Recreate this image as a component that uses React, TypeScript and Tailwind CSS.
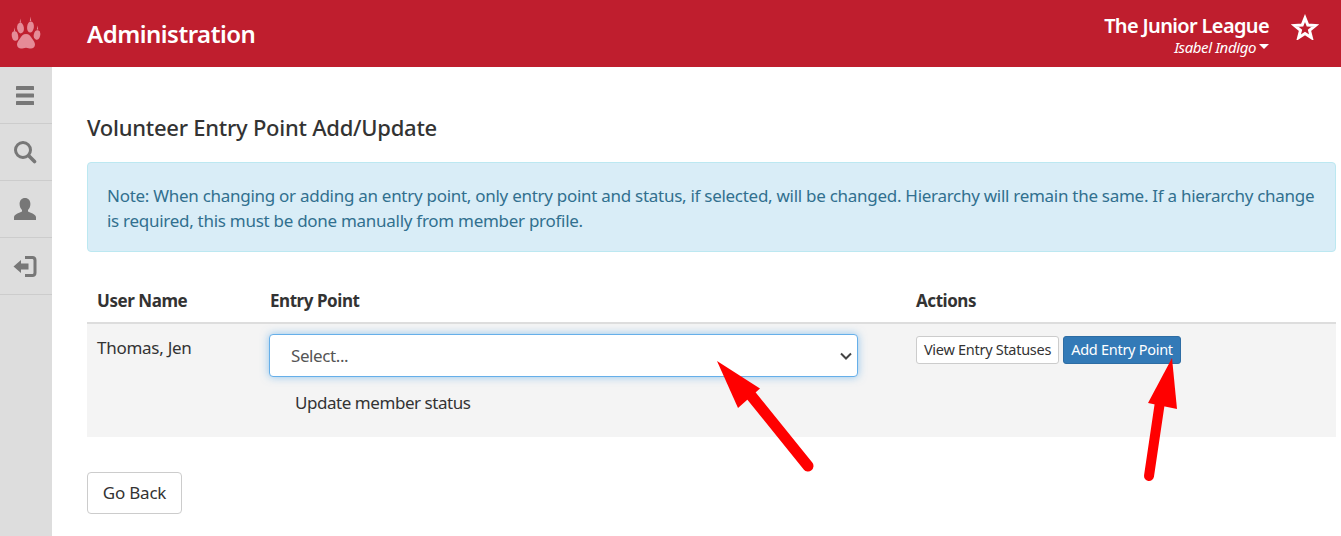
import React from "react";

function Paw() {
  return (
    <svg width="30" height="35" viewBox="0 0 30 35" fill="#e58b97">
      <path d="M15 18c3 0 4.500 2 6 4.500 1.500 2.300 3 3.700 3 6 0 2.800-2 4-4 4-1.800 0-3.300-.8-5-.8s-3.200.8-5 .8c-2 0-4-1.200-4-4 0-2.300 1.500-3.700 3-6 1.500-2.500 3-4.500 6-4.500z" />
      <ellipse cx="4" cy="20" rx="3.200" ry="4.800" transform="rotate(-10 4 20)" />
      <ellipse cx="9.500" cy="12" rx="3.400" ry="5.400" transform="rotate(-6 9.500 12)" />
      <ellipse cx="19.500" cy="11" rx="3.400" ry="5.600" transform="rotate(6 19.500 11)" />
      <ellipse cx="26" cy="19" rx="3.200" ry="4.800" transform="rotate(12 26 19)" />
      <path d="M9.300 2.500l.7 4h-1.400zM19.500 .5l.7 4.500h-1.400zM26.500 9.500l.7 4h-1.400zM3.500 11.500l.7 4h-1.400z" />
    </svg>
  );
}

function Star() {
  return (
    <svg width="28" height="26" viewBox="0 0 28 26" fill="none" stroke="#fff" strokeWidth="3" strokeLinejoin="miter">
      <path d="M14 4l2.800 7 7.600.5-5.900 4.800 1.900 7.400L14 19.600l-6.400 4.100 1.900-7.400-5.900-4.800 7.600-.5z" />
    </svg>
  );
}

function Menu() {
  return (
    <svg width="20" height="19" viewBox="0 0 20 19" fill="#777">
      <rect x="1" y="0" width="18" height="4" rx="0.6" />
      <rect x="1" y="7.500" width="18" height="4" rx="0.6" />
      <rect x="1" y="15" width="18" height="4" rx="0.6" />
    </svg>
  );
}

function Search() {
  return (
    <svg width="24" height="24" viewBox="0 0 24 24" fill="none" stroke="#777">
      <circle cx="10" cy="10" r="7.500" strokeWidth="3" />
      <path d="M16 16l5.500 5.500" strokeWidth="3.600" strokeLinecap="round" />
    </svg>
  );
}

function User() {
  return (
    <svg width="24" height="24" viewBox="0 0 24 24" fill="#777">
      <path d="M12 1c3.400 0 5.400 2.600 5.400 6 0 2.500-1 4.700-2.400 6v1.600c2.400 1.100 7.200 2.400 8 5.400V23H1v-3c.8-3 5.600-4.300 8-5.400V13c-1.400-1.300-2.400-3.500-2.400-6 0-3.400 2-6 5.400-6z" />
    </svg>
  );
}

function LogIn() {
  return (
    <svg width="24" height="21" viewBox="0 0 24 21" fill="#777">
      <path d="M0.500 10.500L8 4v3.500h7.500v6H8V17z" />
      <path d="M12 0h7.500C21.900 0 23.500 1.600 23.500 4v13c0 2.400-1.600 4-4 4H12v-3h7c1 0 1.500-.5 1.500-1.500v-12C20.500 3.500 20 3 19 3h-7z" />
    </svg>
  );
}

function Chevron() {
  return (
    <svg width="12" height="8" viewBox="0 0 12 8" fill="none" stroke="#444" strokeWidth="2">
      <path d="M1 1.500l5 5 5-5" />
    </svg>
  );
}

function SideItem({ children }: { children: React.ReactNode }) {
  return (
    <div className="flex h-[57px] items-center justify-center border-b border-[#cccccc] pr-[3px]">{children}</div>
  );
}

export default function App() {
  return (
    <div
      className="relative flex h-[536px] w-[1341px] flex-col overflow-hidden bg-white text-[#333333]"
      style={{ fontFamily: '"Noto Sans", sans-serif' }}
    >
      <header className="flex h-[67px] shrink-0 items-center bg-[#bf1e2e] text-white">
        <div className="flex w-[52px] shrink-0 justify-center pr-[1px]">
          <Paw />
        </div>
        <div className="pl-[35px] text-[24px] font-semibold tracking-[-0.5px]">Administration</div>
        <div className="ml-auto flex flex-col items-end pt-[2px]">
          <div className="text-[20px] font-semibold leading-[24px] tracking-[-0.65px]">The Junior League</div>
          <div className="flex items-center gap-[3px] text-[15px] italic leading-[18px] tracking-[-0.4px]">
            Isabel Indigo
            <span className="h-0 w-0 border-x-[5px] border-t-[5px] border-x-transparent border-t-white" />
          </div>
        </div>
        <div className="flex w-[72px] justify-center pb-[14px]">
          <Star />
        </div>
      </header>
      <div className="flex flex-1">
        <aside className="w-[52px] shrink-0 bg-[#dddddd]">
          <SideItem><Menu /></SideItem>
          <SideItem><Search /></SideItem>
          <SideItem><User /></SideItem>
          <SideItem><LogIn /></SideItem>
        </aside>
        <main className="flex-1 pl-[35px] pr-[5px]">
          <h1 className="mt-[46px] text-[22px] font-medium leading-[28px] tracking-[-0.25px]">Volunteer Entry Point Add/Update</h1>
          <div className="mt-[21px] h-[90px] rounded-[4px] border border-[#bce8f1] bg-[#d9edf7] pl-[19px] pr-[10px] pt-[20px] text-[17px] leading-[25px] tracking-[-0.28px] text-[#31708f]">
            Note: When changing or adding an entry point, only entry point and status, if selected, will be changed. Hierarchy will remain the same. If a hierarchy change is required, this must be done manually from member profile.
          </div>
          <div className="mt-[27px] flex h-[45px] items-center border-b-2 border-[#dddddd] text-[17px] font-bold tracking-[-0.45px]">
            <div className="w-[183px] pl-[10px]">User Name</div>
            <div className="w-[646px]">Entry Point</div>
            <div>Actions</div>
          </div>
          <div className="flex h-[113px] bg-[#f4f4f4] text-[17px]">
            <div className="w-[182px] pl-[10px] pt-[12px] leading-[24px] tracking-[-0.27px]">Thomas, Jen</div>
            <div className="w-[647px] pt-[10px]">
              <div className="flex h-[43px] w-[589px] items-center justify-between rounded-[4px] border border-[#66afe9] bg-white pl-[21px] pr-[5px] shadow-[0_0_8px_rgba(102,175,233,0.7)]">
                <span className="tracking-[-0.4px] text-[#555555]">Select...</span>
                <Chevron />
              </div>
              <div className="mt-[14px] pl-[26px] leading-[24px] tracking-[-0.45px]">Update member status</div>
            </div>
            <div className="flex items-start gap-[4px] pt-[12px] text-[14.500px] tracking-[-0.28px]">
              <button className="h-[28px] w-[143px] rounded-[3px] border border-[#cccccc] bg-white">View Entry Statuses</button>
              <button className="h-[28px] w-[118px] rounded-[3px] border border-[#2e6da4] bg-[#337ab7] text-white">Add Entry Point</button>
            </div>
          </div>
          <button className="mt-[35px] h-[42px] w-[95px] rounded-[4px] border border-[#cccccc] bg-white text-[17px] tracking-[-0.2px]">Go Back</button>
        </main>
      </div>
      <svg className="pointer-events-none absolute left-0 top-0" width="1341" height="536" viewBox="0 0 1341 536">
        <path d="M808 466L745 388" stroke="#ff0000" strokeWidth="11" strokeLinecap="round" fill="none" />
        <path d="M717 361L760 388.500L738 408z" fill="#ff0000" />
        <path d="M1149 476L1161 395" stroke="#ff0000" strokeWidth="10" strokeLinecap="round" fill="none" />
        <path d="M1172 358L1148 403L1177 409z" fill="#ff0000" />
      </svg>
    </div>
  );
}
